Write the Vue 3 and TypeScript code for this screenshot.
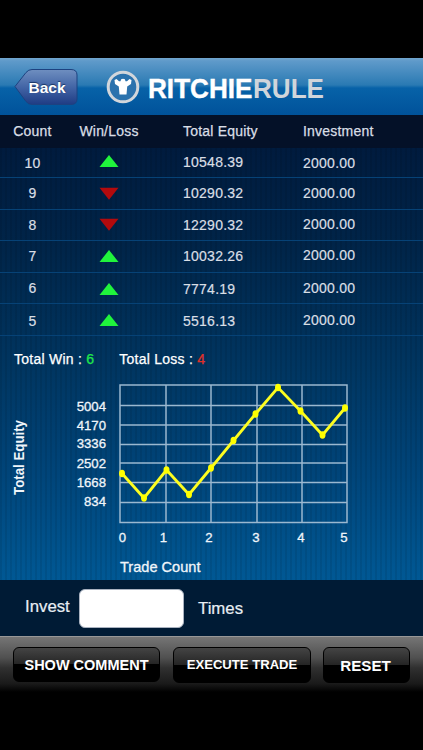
<script setup lang="ts">
interface Trade {
  count: number
  win: boolean
  equity: string
  investment: string
}

const trades: Trade[] = [
  { count: 10, win: true, equity: '10548.39', investment: '2000.00' },
  { count: 9, win: false, equity: '10290.32', investment: '2000.00' },
  { count: 8, win: false, equity: '12290.32', investment: '2000.00' },
  { count: 7, win: true, equity: '10032.26', investment: '2000.00' },
  { count: 6, win: true, equity: '7774.19', investment: '2000.00' },
  { count: 5, win: true, equity: '5516.13', investment: '2000.00' },
]

const yTicks = [
  { label: '5004', y: 35.5, text: 40.5 },
  { label: '4170', y: 55, text: 59.5 },
  { label: '3336', y: 74.5, text: 78 },
  { label: '2502', y: 93, text: 97.5 },
  { label: '1668', y: 112.5, text: 117 },
  { label: '834', y: 132.5, text: 135.5 },
]
const xTicks = [
  { label: '0', x: 122.5 },
  { label: '1', x: 163.5 },
  { label: '2', x: 209 },
  { label: '3', x: 256 },
  { label: '4', x: 301 },
  { label: '5', x: 344 },
]
const gridX = [166, 211, 257, 302]
const points: [number, number][] = [
  [122, 103.5], [144, 128], [166.5, 100], [189, 124.5], [211, 98],
  [233.5, 70.5], [255.5, 44], [278, 17.5], [300.5, 41], [322.5, 65], [345, 38],
]
const line = points.map((p) => p.join(',')).join(' ')
</script>

<template>
  <main class="screen">
    <header class="bar">
      <button class="back">
        <svg width="66" height="40" viewBox="0 0 66 40">
          <defs>
            <linearGradient id="backFill" x1="0" y1="0" x2="0" y2="1">
              <stop offset="0" stop-color="#6f8fc0" />
              <stop offset="0.5" stop-color="#4365a6" />
              <stop offset="1" stop-color="#1f3c84" />
            </linearGradient>
          </defs>
          <path
            d="M2 19.500 L13 5.500 Q15.500 2.500 19 2.500 H58 Q64 2.500 64 8 V32 Q64 37.500 58 37.500 H19 Q15.500 37.500 13 34.500 Z"
            fill="url(#backFill)" stroke="#1d4280" stroke-width="1"
          />
          <text x="15.500" y="25.500" textLength="37" lengthAdjust="spacingAndGlyphs" class="back-text">Back</text>
        </svg>
      </button>
      <svg class="logo" width="36" height="36" viewBox="0 0 36 36">
        <circle cx="18" cy="18" r="14.800" fill="#2b72ad" stroke="#d2d6db" stroke-width="3" />
        <path
          d="M9.500 11 L11.500 10 L14 12.200 L15.500 12.200 Q15.500 9.800 18 9.800 Q20.500 9.800 20.500 12.200 L22 12.200 L24.500 10 L26.500 11 L26 15 L22.200 17.500 L21.500 25.500 H14.500 L13.800 17.500 L10 15 Z"
          fill="#fff"
        />
      </svg>
      <svg class="brand" width="200" height="44" viewBox="0 0 200 44">
        <text x="1" y="31.800" textLength="104.500" lengthAdjust="spacingAndGlyphs" fill="#fff" stroke="#fff">RITCHIE</text>
        <text x="106" y="31.800" textLength="71" lengthAdjust="spacingAndGlyphs" fill="#d0d5db">RULE</text>
      </svg>
    </header>

    <div class="row head">
      <span class="center">Count</span>
      <span class="center">Win/Loss</span>
      <span class="equity">Total Equity</span>
      <span>Investment</span>
    </div>

    <section class="body">
      <div v-for="t in trades" :key="t.count" class="row trade">
        <span class="center">{{ t.count }}</span>
        <span class="center">
          <svg width="20" height="13" viewBox="0 0 20 13">
            <path v-if="t.win" d="M0.500 12 L10 0 L19.500 12 Z" fill="#20f43c" />
            <path v-else d="M0.500 0.800 H19.500 L10 12.800 Z" fill="#b20a0d" />
          </svg>
        </span>
        <span class="equity">{{ t.equity }}</span>
        <span class="investment">{{ t.investment }}</span>
      </div>

      <div class="totals">
        <span>Total Win : <b class="win">6</b></span>
        <span>Total Loss : <b class="loss">4</b></span>
      </div>

      <svg class="chart" width="423" height="210" viewBox="0 0 423 210">
        <g stroke="#9bb8d0" stroke-width="1.500" fill="none">
          <path d="M120 15 H347 V152.500 H120 Z" />
          <path v-for="t in yTicks" :key="t.label" :d="`M120 ${t.y} H347`" />
          <path v-for="x in gridX" :key="x" :d="`M${x} 15 V152.500`" />
        </g>
        <polyline :points="line" fill="none" stroke="#fdfd20" stroke-width="2.800" />
        <ellipse v-for="p in points" :key="p[0]" :cx="p[0]" :cy="p[1]" rx="3" ry="3.700" fill="#ffff00" />
        <g class="ticks">
          <text v-for="t in yTicks" :key="t.label" x="106" :y="t.text" text-anchor="end">{{ t.label }}</text>
          <text v-for="t in xTicks" :key="t.label" :x="t.x" y="171.500" text-anchor="middle">{{ t.label }}</text>
        </g>
        <text class="axis" x="120" y="201.500" textLength="80.500" lengthAdjust="spacingAndGlyphs">Trade Count</text>
        <text class="axis vertical" transform="translate(24 125) rotate(-90)" textLength="75" lengthAdjust="spacingAndGlyphs">Total Equity</text>
      </svg>
    </section>

    <section class="invest">
      <label for="times">Invest</label>
      <input id="times" type="text" />
      <span>Times</span>
    </section>

    <footer class="actions">
      <button class="show">SHOW COMMENT</button>
      <button class="execute">EXECUTE TRADE</button>
      <button class="reset">RESET</button>
    </footer>
  </main>
</template>

<style>
body {
  background: #000;
}
</style>

<style scoped>
.screen {
  box-sizing: border-box;
  width: 423px;
  height: 750px;
  padding-top: 58px;
  background: #000;
  color: #d9dee5;
  font-family: "Liberation Sans", Arial, sans-serif;
  font-size: 14px;
  overflow: hidden;
}
button {
  border: 0;
  padding: 0;
  font-family: inherit;
}
.bar {
  display: flex;
  align-items: flex-start;
  height: 57px;
  background: linear-gradient(#71a5ce 0, #5f9aca 3px, #2a7ab3 27px, #0762a8 30px, #00529a 100%);
}
.back {
  margin: 9px 0 0 13px;
  height: 40px;
  background: none;
}
.back-text {
  font-size: 15.500px;
  font-weight: bold;
  fill: #fff;
  text-shadow: 0 -1px 1px #173362;
}
.logo {
  margin: 11px 0 0 26px;
}
.brand {
  margin: 8px 0 0 6px;
  overflow: visible;
  font-size: 28px;
  font-weight: bold;
  stroke-width: 0.400;
}
.row {
  display: grid;
  grid-template-columns: 65px 88px 150px 1fr;
  align-items: center;
}
.center {
  text-align: center;
}
.equity {
  padding-left: 30px;
}
.head {
  box-sizing: border-box;
  height: 33px;
  padding-bottom: 1px;
  background: #041128;
  letter-spacing: 0.2px;
  -webkit-text-stroke: 0.25px #d9dee5;
}
.body {
  height: 432px;
  background:
    repeating-linear-gradient(90deg, rgba(0, 0, 0, 0.08) 0 2px, transparent 2px 5px),
    linear-gradient(#001b3e 0, #002448 22%, #003560 50%, #00457a 76%, #005894 100%);
}
.trade {
  box-sizing: border-box;
  height: 31.600px;
  border-bottom: 1px solid #064276;
  letter-spacing: 0.25px;
  -webkit-text-stroke: 0.2px #d9dee5;
}
.trade:first-child {
  height: 30px;
}
.trade:first-child .equity {
  padding-bottom: 2px;
}
.trade:nth-child(3) .investment,
.trade:nth-child(4) .investment {
  padding-bottom: 2px;
}
.trade:nth-child(5) .equity,
.trade:nth-child(6) .equity,
.trade:nth-child(6) .center:first-child {
  padding-top: 2px;
}
.trade svg {
  display: block;
  margin: 0 auto;
}
.trade:nth-child(6) svg,
.trade:nth-child(5) svg {
  margin-top: 2px;
}
.trade:first-child svg {
  margin-bottom: 2px;
}
.totals {
  display: flex;
  height: 34px;
  padding: 15px 0 0 14px;
  box-sizing: border-box;
  gap: 25px;
  color: #fff;
  letter-spacing: 0.250px;
  -webkit-text-stroke: 0.25px currentColor;
}
.totals b {
  font-weight: normal;
}
.totals .win {
  color: #20e84a;
  -webkit-text-stroke-color: #20e84a;
}
.totals .loss {
  color: #e03028;
  -webkit-text-stroke-color: #e03028;
}
.chart {
  display: block;
}
.chart text {
  fill: #f0f5fa;
}
.ticks {
  font-size: 13.200px;
  stroke: #f0f5fa;
  stroke-width: 0.300;
}
.axis {
  font-size: 14.300px;
  stroke: #f0f5fa;
  stroke-width: 0.300;
}
.chart .vertical {
  font-weight: bold;
  stroke: none;
}
.invest {
  display: flex;
  box-sizing: border-box;
  height: 56px;
  padding: 9px 0 0 25px;
  background: #001b35;
  font-size: 16.800px;
  line-height: 36px;
  color: #e8eef4;
  -webkit-text-stroke: 0.2px #e8eef4;
}
.invest label {
  width: 47px;
  line-height: 35px;
}
.invest input {
  box-sizing: border-box;
  width: 105px;
  height: 39px;
  margin: 0 14px 0 7px;
  border: 1px solid #a9b2c0;
  border-radius: 6px;
  background: #fff;
}
.invest span {
  padding-top: 2px;
}
.actions {
  display: flex;
  box-sizing: border-box;
  height: 56px;
  padding: 10px 13px 0;
  border-top: 1px solid #989898;
  background: linear-gradient(#757575 0, #505050 38%, #303030 56%, #1a1a1a 85%, #000 100%);
}
.actions button {
  box-sizing: border-box;
  height: 35px;
  border: 1px solid #000;
  border-radius: 6px;
  background: linear-gradient(#444 0, #252525 49%, #000 50%, #000 100%);
  color: #fff;
  font-weight: bold;
  font-size: 14.500px;
  white-space: nowrap;
}
.actions .show {
  width: 147px;
}
.actions .execute {
  width: 138px;
  height: 36px;
  margin-left: 13px;
  padding-bottom: 2px;
  font-size: 13.100px;
}
.actions .reset {
  width: 87px;
  height: 36px;
  margin-left: 12px;
  padding: 0 2px 0 0;
  font-size: 15.200px;
}
</style>
